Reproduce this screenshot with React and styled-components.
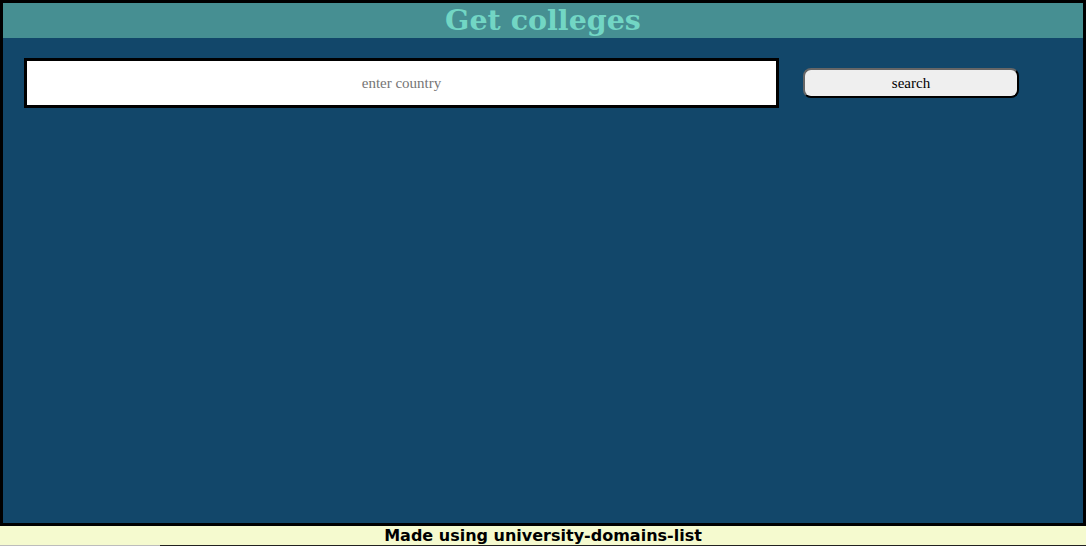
import React from "react";
import styled, { createGlobalStyle } from "styled-components";

const GlobalStyle = createGlobalStyle`
  body {
    margin: 0;
    font-family: "Liberation Serif", serif;
    overflow: hidden;
  }
`;

const App = () => {
  return (
    <>
      <GlobalStyle />
      <Wrapper>
        <Header>
          <Title>Get colleges</Title>
        </Header>
        <SearchRow>
          <CountryInput type="text" placeholder="enter country" />
          <SearchButton>search</SearchButton>
        </SearchRow>
      </Wrapper>
      <Footer>Made using university-domains-list</Footer>
      <Rule />
    </>
  );
};

export default App;

const Wrapper = styled.div`
  height: 520px;
  border: 3px solid #000;
  background: #12476a;
  display: flex;
  flex-direction: column;
`;

const Header = styled.div`
  height: 35px;
  background: #468f92;
  display: flex;
  justify-content: center;
  align-items: center;
`;

const Title = styled.h1`
  margin: 0;
  font-family: "DejaVu Serif", "Liberation Serif", serif;
  font-size: 28.5px;
  font-weight: 700;
  color: #72d6c4;
  line-height: 35px;
`;

const SearchRow = styled.div`
  display: flex;
  align-items: center;
  gap: 24px;
  padding: 20px 21px;
`;

const CountryInput = styled.input`
  box-sizing: border-box;
  width: 755px;
  height: 50px;
  border: 3px solid #000;
  background: #fff;
  text-align: center;
  font-family: "Liberation Serif", serif;
  font-size: 15px;
  outline: none;

  &::placeholder {
    color: #757575;
  }
`;

const SearchButton = styled.button`
  box-sizing: border-box;
  width: 216px;
  height: 30px;
  border: 2px solid #444;
  border-top-color: #666;
  border-left-color: #666;
  border-bottom-color: #000;
  border-right-color: #000;
  border-radius: 8px;
  background: #efefef;
  font-family: "Liberation Serif", serif;
  font-size: 15px;
  color: #000;
`;

const Footer = styled.div`
  height: 19px;
  background: #f5facf;
  text-align: center;
  font-family: "DejaVu Sans", Verdana, sans-serif;
  font-size: 16px;
  font-weight: 700;
  line-height: 20px;
  color: #000;
`;

const Rule = styled.div`
  height: 1px;
  background: linear-gradient(to right, #bcbcbc 160px, #222 160px);
`;
